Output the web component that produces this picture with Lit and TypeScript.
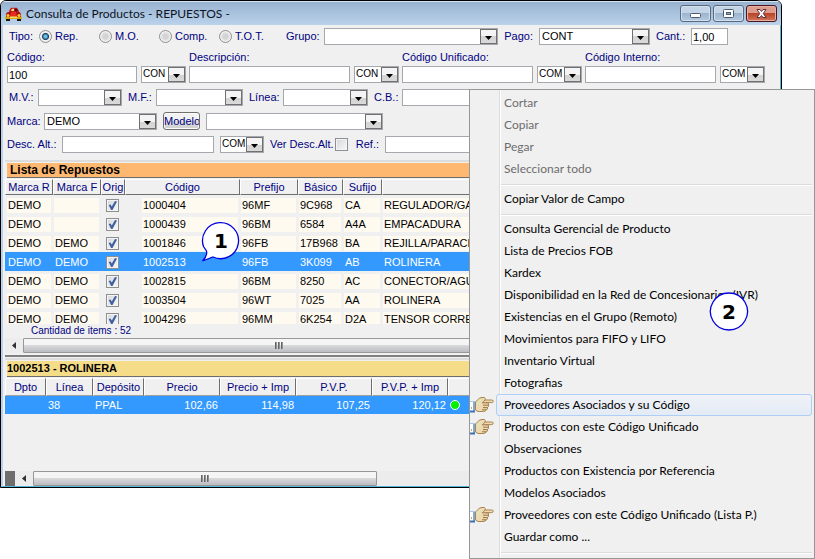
import { LitElement, html, css, svg, nothing } from "lit";
import { customElement, property } from "lit/decorators.js";

const box = css`
  *,
  *::before,
  *::after {
    box-sizing: border-box;
  }
`;

const check = css`
  input[type="checkbox"] {
    appearance: none;
    display: block;
    flex: none;
    width: 13px;
    height: 13px;
    margin: 0;
    border: 1px solid #8e8f8f;
    background: linear-gradient(135deg, #d4d7dc, #f8f8f8);
    box-shadow: inset 0 0 0 1px #f4f4f4;
  }
  input[type="checkbox"]:checked::before {
    content: "";
    display: block;
    width: 9px;
    height: 9px;
    margin: 1px;
    background: #40609f;
    clip-path: polygon(8% 45%, 28% 38%, 42% 62%, 78% 0, 100% 6%, 50% 100%, 34% 100%);
  }
`;

/** Drop-down with a raised arrow button. */
@customElement("combo-box")
export class ComboBox extends LitElement {
  @property() value = "";
  @property() name = "";
  @property({ type: Boolean }) small = false;

  static styles = [
    box,
    css`
      :host {
        display: grid;
        min-width: 0;
        height: 17px;
      }
      select,
      .arrow {
        grid-area: 1 / 1;
      }
      select {
        appearance: none;
        width: 100%;
        min-width: 0;
        height: 17px;
        margin: 0;
        padding: 0 18px 0 2px;
        border: 1px solid #a5a8ad;
        border-radius: 0;
        background: #fff;
        color: #000;
        font: 11px/15px "Liberation Sans", Arial, sans-serif;
      }
      select.small {
        font-size: 10px;
        line-height: 13px;
        padding: 0 16px 2px 1px;
      }
      .arrow {
        justify-self: end;
        display: flex;
        align-items: center;
        justify-content: center;
        width: 17px;
        height: 15px;
        margin: 1px;
        border: 1px solid #707070;
        background: linear-gradient(#f4f4f4 50%, #d2d2d2 50%, #dadada);
        pointer-events: none;
      }
      svg {
        display: block;
        margin-top: 3px;
      }
    `,
  ];

  render() {
    return html`<select class=${this.small ? "small" : ""} aria-label=${this.name}>
        <option>${this.value}</option>
      </select>
      <span class="arrow"
        ><svg width="7" height="4" viewBox="0 0 7 4"><path d="M0 0h7L3.5 4z" fill="#000" /></svg
      ></span>`;
  }
}

/** Horizontal scroll bar with a left arrow and a thumb. */
@customElement("scroll-strip")
export class ScrollStrip extends LitElement {
  @property({ type: Number }) share = 60;

  static styles = [
    box,
    css`
      :host {
        display: flex;
        height: 15px;
        background: #ececec;
      }
      .left {
        display: grid;
        place-items: center;
        width: 18px;
        padding: 0;
        border: 0;
        background: none;
      }
      .thumb {
        display: flex;
        align-items: center;
        justify-content: center;
        gap: 1px;
        border: 1px solid #979797;
        border-radius: 1px;
        background: linear-gradient(#f5f5f5 45%, #d9d9dc 50%, #bcbdc1);
      }
      .thumb i {
        width: 2px;
        height: 7px;
        background: linear-gradient(90deg, #505050, #a8a8a8);
      }
    `,
  ];

  render() {
    return html`<button class="left" aria-label="Desplazar a la izquierda">
        <svg width="4" height="7" viewBox="0 0 4 7"><path d="M4 0v7L0 3.5z" fill="#303030" /></svg>
      </button>
      <div class="thumb" style="width:${this.share}%"><i></i><i></i><i></i></div>`;
  }
}

interface Part {
  marcaR: string;
  marcaF: string;
  codigo: string;
  prefijo: string;
  basico: string;
  sufijo: string;
  desc: string;
}

const part = (
  marcaF: string,
  codigo: string,
  prefijo: string,
  basico: string,
  sufijo: string,
  desc: string
): Part => ({ marcaR: "DEMO", marcaF, codigo, prefijo, basico, sufijo, desc });

const PARTS: Part[] = [
  part("", "1000404", "96MF", "9C968", "CA", "REGULADOR/GASOLINA"),
  part("", "1000439", "96BM", "6584", "A4A", "EMPACADURA"),
  part("DEMO", "1001846", "96FB", "17B968", "BA", "REJILLA/PARACHOQUE"),
  part("DEMO", "1002513", "96FB", "3K099", "AB", "ROLINERA"),
  part("DEMO", "1002815", "96BM", "8250", "AC", "CONECTOR/AGUA"),
  part("DEMO", "1003504", "96WT", "7025", "AA", "ROLINERA"),
  part("DEMO", "1004296", "96MM", "6K254", "D2A", "TENSOR CORREA"),
];
const SELECTED = "1002513";

/** Table of the spare parts found. */
@customElement("parts-list")
export class PartsList extends LitElement {
  static styles = [
    box,
    check,
    css`
      :host {
        display: block;
        height: 145px;
        overflow: hidden;
      }
      table {
        width: 100%;
        table-layout: fixed;
        border-collapse: separate;
        border-spacing: 0;
        font: 11px/14px "Liberation Sans", Arial, sans-serif;
        color: #000;
      }
      col.marca {
        width: 48px;
      }
      col.orig {
        width: 24px;
      }
      col.codigo {
        width: 115px;
      }
      col.prefijo {
        width: 58px;
      }
      col.basico {
        width: 45px;
      }
      col.sufijo {
        width: 39px;
      }
      th {
        height: 16px;
        padding: 0;
        border: 1px solid;
        border-color: #fff #6e6e6e #6e6e6e #fff;
        color: #000080;
        font-weight: normal;
        white-space: nowrap;
      }
      td {
        height: 19px;
        padding: 3px 2px 1px 1px;
        white-space: nowrap;
      }
      td:first-child {
        padding-left: 2px;
      }
      td.codigo {
        padding-left: 17px;
      }
      td span {
        display: block;
        height: 15px;
        padding-left: 1px;
        background: #fffaf0;
      }
      td input[type="checkbox"] {
        margin: 0 auto;
      }
      tr.selected {
        background: #3399ff;
        color: #fff;
      }
      tr.selected span {
        background: none;
      }
    `,
  ];

  render() {
    return html`<table>
      <colgroup>
        <col class="marca" />
        <col class="marca" />
        <col class="orig" />
        <col class="codigo" />
        <col class="prefijo" />
        <col class="basico" />
        <col class="sufijo" />
        <col />
      </colgroup>
      <thead>
        <tr>
          <th>Marca R</th>
          <th>Marca F</th>
          <th>Orig</th>
          <th>Código</th>
          <th>Prefijo</th>
          <th>Básico</th>
          <th>Sufijo</th>
          <th></th>
        </tr>
      </thead>
      <tbody>
        ${PARTS.map(
          (p) => html`<tr class=${p.codigo === SELECTED ? "selected" : ""}>
            <td><span>${p.marcaR}</span></td>
            <td><span>${p.marcaF}</span></td>
            <td><input type="checkbox" checked aria-label="Original ${p.codigo}" /></td>
            <td class="codigo"><span>${p.codigo}</span></td>
            <td><span>${p.prefijo}</span></td>
            <td><span>${p.basico}</span></td>
            <td><span>${p.sufijo}</span></td>
            <td><span>${p.desc}</span></td>
          </tr>`
        )}
      </tbody>
    </table>`;
  }
}

/** Prices of the selected part, by warehouse. */
@customElement("price-list")
export class PriceList extends LitElement {
  static styles = [
    box,
    css`
      :host {
        display: block;
        min-height: 93px;
      }
      table {
        width: 100%;
        table-layout: fixed;
        border-collapse: separate;
        border-spacing: 0;
        font: 11px/15px "Liberation Sans", Arial, sans-serif;
      }
      col.dpto {
        width: 41px;
      }
      col.linea {
        width: 47px;
      }
      col.deposito {
        width: 51px;
      }
      col.precio {
        width: 76px;
      }
      th {
        height: 18px;
        padding: 0;
        border: 1px solid;
        border-color: #fff #6e6e6e #a0a0a0 #fff;
        color: #000080;
        font-weight: normal;
        white-space: nowrap;
      }
      td {
        height: 18px;
        padding: 1px 2px;
        background: #3399ff;
        color: #fff;
      }
      td.num {
        text-align: right;
      }
      .dot {
        display: block;
        width: 10px;
        height: 10px;
        border: 1px solid #fff;
        border-radius: 50%;
        background: #00f000;
      }
    `,
  ];

  render() {
    return html`<table>
      <colgroup>
        <col class="dpto" />
        <col class="linea" />
        <col class="deposito" />
        <col class="precio" />
        <col class="precio" />
        <col class="precio" />
        <col class="precio" />
        <col />
      </colgroup>
      <thead>
        <tr>
          <th>Dpto</th>
          <th>Línea</th>
          <th>Depósito</th>
          <th>Precio</th>
          <th>Precio + Imp</th>
          <th>P.V.P.</th>
          <th>P.V.P. + Imp</th>
          <th></th>
        </tr>
      </thead>
      <tbody>
        <tr>
          <td></td>
          <td>38</td>
          <td>PPAL</td>
          <td class="num">102,66</td>
          <td class="num">114,98</td>
          <td class="num">107,25</td>
          <td class="num">120,12</td>
          <td><span class="dot"></span></td>
        </tr>
      </tbody>
    </table>`;
  }
}

interface MenuEntry {
  text: string;
  disabled?: boolean;
  hand?: boolean;
  active?: boolean;
}

const MENU: MenuEntry[][] = [
  ["Cortar", "Copiar", "Pegar", "Seleccionar todo"].map((text) => ({ text, disabled: true })),
  [{ text: "Copiar Valor de Campo" }],
  [
    { text: "Consulta Gerencial de Producto" },
    { text: "Lista de Precios FOB" },
    { text: "Kardex" },
    { text: "Disponibilidad en la Red de Concesionarios (IVR)" },
    { text: "Existencias en el Grupo (Remoto)" },
    { text: "Movimientos para FIFO y LIFO" },
    { text: "Inventario Virtual" },
    { text: "Fotografias" },
    { text: "Proveedores Asociados y su Código", hand: true, active: true },
    { text: "Productos con este Código Unificado", hand: true },
    { text: "Observaciones" },
    { text: "Productos con Existencia por Referencia" },
    { text: "Modelos Asociados" },
    { text: "Proveedores con este Código Unificado (Lista P.)", hand: true },
    { text: "Guardar como ..." },
  ],
];

const hand = html`<svg width="24" height="18" viewBox="0 0 24 18">
  <path d="M0 5.5H4V15H0z" fill="#fff" />
  <path d="M0 5h5v1H0z" fill="#a9c8ec" />
  <path d="M3 6h2v9H3z" fill="#7fa9dc" />
  <path d="M0 14.500h5V16.500H0z" fill="#3f6fb0" />
  <path d="M1 11h1v2H1z" fill="#c8a840" />
  <path
    d="M5.500 6 L8 3.5 Q9 1.5 12 1.5 H14.5 Q16 2.5 15 4 H21.5 Q23.5 4 23.3 5.5 Q23 6.6 21.5 6.6 H16.5 Q19.5 7 18.5 9 Q19 10.5 17.5 11.5 Q18 13.5 16 14 Q15.5 15.5 13.5 15.5 H8 L5.500 14 Z"
    fill="#efd9ae"
    stroke="#a98352"
  />
  <path d="M8 5 Q10 2.5 13 3 L11 6 L11 9 H7 V6z" fill="#e2e3bb" />
  <path d="M12 6.8h5M13 9.2h5M13 11.6h4.5M12 13.8h4" stroke="#9c7444" fill="none" />
  <path d="M15 4 L12.5 6.8" stroke="#a98352" fill="none" />
</svg>`;

/** Context menu of the parts list. */
@customElement("context-menu")
export class ContextMenu extends LitElement {
  static styles = [
    box,
    css`
      :host {
        display: block;
        box-sizing: border-box;
        padding: 2px;
        border: 1px solid #979797;
        background: linear-gradient(90deg, #f0f0f0 29px, #dcdcdc 29px 30px, #fff 30px 31px, #f0f0f0 31px);
        font: 12px/20px Lato, "Open Sans", sans-serif;
      }
      ul {
        margin: 0;
        padding: 0;
        list-style: none;
      }
      ul.group::after {
        content: "";
        display: block;
        height: 2px;
        margin: 4px 0 2px 29px;
        border-top: 1px solid #dcdcdc;
        border-bottom: 1px solid #fff;
      }
      li {
        display: flex;
        height: 22px;
      }
      .icon {
        flex: none;
        display: flex;
        align-items: center;
        width: 24px;
        margin-left: -2px;
        margin-right: 2px;
      }
      button {
        flex: 1;
        padding: 0 0 0 7px;
        border: 1px solid transparent;
        border-radius: 3px;
        background: none;
        color: #000;
        font: inherit;
        text-align: left;
        white-space: nowrap;
      }
      button:disabled {
        color: #6d6d6d;
      }
      button.active {
        border-color: #aecff7;
        background: linear-gradient(#f0f2f6, #e4ebf5);
      }
    `,
  ];

  render() {
    return MENU.map(
      (group) => html`<ul class="group">
        ${group.map(
          (e) => html`<li>
            <span class="icon">${e.hand ? hand : nothing}</span>
            <button class=${e.active ? "active" : ""} ?disabled=${e.disabled}>${e.text}</button>
          </li>`
        )}
      </ul>`
    );
  }
}

const car = html`<svg width="17" height="14" viewBox="0 0 17 14">
  <path d="M4 4 L6 0.8 H12 L14 4 L13 8 H5z" fill="#c01818" />
  <path d="M6 4 L7 1.8 H9 V4z" fill="#f2e28a" />
  <path d="M10 4 V1.8 H11.5 L12.6 4z" fill="#301010" />
  <path d="M1 8 Q1 5 4 5 H14 Q16 5 16 9 V11 H1z" fill="#a81414" />
  <path d="M6 5h5l1 5H5z" fill="#e82c20" />
  <circle cx="3" cy="8.500" r="1.500" fill="#f5d020" />
  <circle cx="14" cy="8.500" r="1.500" fill="#f5d020" />
  <path d="M0 10h17v2H0z" fill="#d8a810" />
  <path d="M5 9.500h7v1.500H5z" fill="#f8e060" />
  <path d="M1 12h4v2H1zM12 12h4v2h-4z" fill="#181818" />
</svg>`;

const controlIcon = {
  min: svg`<rect x="0.5" y="4.500" width="10" height="4" rx="1" fill="#fff" stroke="#4c5a70"/>`,
  max: svg`<rect x="0.500" y="0.500" width="10" height="8" rx="1" fill="#fff" stroke="#4c5a70"/>
    <rect x="3.500" y="3.500" width="4" height="2" fill="#8fa9c8" stroke="#4c5a70"/>`,
  close: svg`<path d="M1 0.500h3l1.500 2 1.500-2h3L7.300 4.500 10 8.500H7L5.500 6.500 4 8.500H1L3.700 4.500z" fill="#fff" stroke="#5a3038"/>`,
};

@customElement("app-root")
export class AppRoot extends LitElement {
  static styles = [
    box,
    check,
    css`
      :host {
        display: block;
        position: relative;
        min-height: 559px;
        padding-right: 33px;
        background: #fff;
        color: #000080;
        font: 11px/15px "Liberation Sans", Arial, sans-serif;
        overflow: hidden;
        box-sizing: border-box;
      }
      .window {
        border: 1px solid #000;
        border-radius: 6px 6px 0 0;
        background: #f0f0f0;
        overflow: hidden;
      }
      .title {
        display: flex;
        align-items: center;
        height: 24px;
        padding: 0 4px;
        border-top: 1px solid #d4e4f4;
        background: linear-gradient(#98b2d0, #bad2eb);
        color: #0c1424;
      }
      .title h1 {
        flex: 1;
        margin: 0 0 0 4px;
        font: 12px/20px Lato, "Open Sans", sans-serif;
      }
      .controls {
        display: flex;
        gap: 2px;
      }
      .controls button {
        display: grid;
        place-items: center;
        width: 31px;
        height: 17px;
        padding: 0;
        border: 1px solid #57697f;
        border-radius: 3px;
        background: linear-gradient(#c3d4e6 50%, #9cb4cd 50%, #b4cce2);
        box-shadow: inset 0 0 0 1px #d4e2f0;
      }
      .controls .close {
        border-color: #4a1420;
        background: linear-gradient(#dd9c8c 45%, #bb4328 50%, #d0765a);
        box-shadow: inset 0 0 0 1px #e6b0a4;
      }
      .body {
        border: solid #b9d1ea;
        border-width: 0 1px 1px 2px;
        border-right-color: #4fb8dc;
        border-bottom-color: #4fb8dc;
      }
      form {
        display: grid;
        gap: 6px;
        padding: 3px 0 7px 4px;
        overflow: hidden;
      }
      .line {
        display: grid;
        gap: 6px;
        align-items: center;
        white-space: nowrap;
      }
      .tipo {
        grid-template-columns: 24px 54px 54px 54px 61px 32px 174fr 29px 111fr 29px 37px;
        padding: 0 52px 0 2px;
      }
      .codes {
        grid-template-columns: 179fr 210fr 180fr 180fr;
        gap: 3px;
        padding-right: 15px;
      }
      .marks {
        grid-template-columns: 23px 84px 22px 87px 28px 85px 22px 130px;
        padding-left: 2px;
      }
      .marca {
        grid-template-columns: 31px 113px 37px 177px;
      }
      .alt {
        grid-template-columns: 49px 152px 44px 78px 25px 148px;
      }
      .end {
        text-align: right;
      }
      .choice {
        display: flex;
        align-items: center;
        gap: 3px;
      }
      .choice input[type="radio"] {
        appearance: none;
        flex: none;
        width: 13px;
        height: 13px;
        margin: 0;
        border: 1px solid #8e8f8f;
        border-radius: 50%;
        background: radial-gradient(circle, #d4d4d4 30%, #f4f4f4 70%);
      }
      .choice input[type="radio"]:checked {
        background: radial-gradient(circle, #6fc4e8 0 1px, #1c4f7c 3px, #123454 3px, #f0f0f0 4px);
      }
      .code {
        display: grid;
        grid-template-columns: 1fr 45px;
        gap: 3px 4px;
      }
      .code label {
        grid-column: 1 / 3;
        line-height: 12px;
      }
      input.text {
        width: 100%;
        min-width: 0;
        height: 17px;
        margin: 0;
        padding: 0 1px;
        border: 1px solid #a5a8ad;
        background: #fff;
        color: #000;
        font: inherit;
      }
      .model {
        height: 18px;
        padding: 0;
        border: 1px solid #707070;
        border-radius: 3px;
        background: linear-gradient(#f2f2f2 50%, #dcdcdc 50%, #d0d0d0);
        box-shadow: inset 0 0 0 1px #fafafa;
        color: #000080;
        font: inherit;
        overflow: hidden;
      }
      .ver {
        display: flex;
        align-items: center;
        justify-content: space-between;
      }
      .panel {
        margin-left: 2px;
        border-top: 2px solid #dcdcdc;
      }
      .panel h2 {
        margin: 1px 0 1px 2px;
        padding: 0 0 0 3px;
        border-bottom: 1px solid #6e6e6e;
        background: #ffb870;
        color: #000;
        font: bold 12px/14px "Liberation Sans", Arial, sans-serif;
      }
      .panel h2.detail {
        padding-left: 0;
        background: #f5dc88;
        font-size: 11px;
        line-height: 15px;
      }
      .count {
        margin: 0;
        padding-left: 26px;
        font-size: 10px;
        line-height: 14px;
      }
      .first {
        padding-bottom: 2px;
        border-bottom: 2px solid #808080;
      }
      .second {
        margin-top: 1px;
      }
      .foot {
        display: flex;
      }
      .foot::before {
        content: "";
        width: 10px;
        background: #6e6e6e;
      }
      .foot scroll-strip {
        flex: 1;
      }
      context-menu {
        position: absolute;
        top: 89px;
        right: 0;
        width: 346px;
      }
      .mark {
        position: absolute;
        display: grid;
        justify-items: center;
        align-items: start;
        width: 40px;
        height: 44px;
        color: #000;
        font: bold 20px/40px "DejaVu Sans", Verdana, sans-serif;
      }
      .mark svg,
      .mark b {
        grid-area: 1 / 1;
      }
      .mark.one {
        left: 201px;
        top: 221px;
      }
      .mark.two {
        right: 66px;
        top: 292px;
      }
    `,
  ];

  private code(label: string, id: string, mode: string, value = "") {
    return html`<div class="code">
      <label for=${id}>${label}</label>
      <input class="text" id=${id} .value=${value} />
      <combo-box small value=${mode} name="Modo ${label}"></combo-box>
    </div>`;
  }

  private bubble(cls: string, n: string, tail: boolean) {
    const d = tail
      ? "M2.500 25.500 A18 18 0 1 1 12 36 L1.500 40 Q6.500 35 5.500 30 Z"
      : "M20 1 A18.500 18.500 0 1 1 19.900 1 Z";
    return html`<div class="mark ${cls}">
      <svg width="40" height="44" viewBox="0 0 40 44">
        <path d=${d} fill="#fff" stroke="#0000e0" stroke-width="1.300" />
      </svg>
      <b>${n}</b>
    </div>`;
  }

  render() {
    return html`<main class="window">
        <header class="title">
          ${car}
          <h1>Consulta de Productos - REPUESTOS -</h1>
          <div class="controls">
            <button aria-label="Minimizar"><svg width="11" height="9">${controlIcon.min}</svg></button>
            <button aria-label="Maximizar"><svg width="11" height="9">${controlIcon.max}</svg></button>
            <button class="close" aria-label="Cerrar"><svg width="11" height="9">${controlIcon.close}</svg></button>
          </div>
        </header>
        <div class="body">
          <form>
            <div class="line tipo">
              <span>Tipo:</span>
              ${["Rep.", "M.O.", "Comp.", "T.O.T."].map(
                (t, i) => html`<label class="choice"
                  ><input type="radio" name="tipo" ?checked=${i === 0} />${t}</label
                >`
              )}
              <span>Grupo:</span>
              <combo-box name="Grupo"></combo-box>
              <span class="end">Pago:</span>
              <combo-box name="Pago" value="CONT"></combo-box>
              <label class="end" for="cant">Cant.:</label>
              <input class="text" id="cant" .value=${"1,00"} />
            </div>
            <div class="line codes">
              ${this.code("Código:", "codigo", "CON", "100")}
              ${this.code("Descripción:", "descripcion", "CON")}
              ${this.code("Código Unificado:", "unificado", "COM")}
              ${this.code("Código Interno:", "interno", "COM")}
            </div>
            <div class="line marks">
              <span>M.V.:</span><combo-box name="M.V."></combo-box>
              <span>M.F.:</span><combo-box name="M.F."></combo-box>
              <span>Línea:</span><combo-box name="Línea"></combo-box>
              <label for="cb">C.B.:</label><input class="text" id="cb" />
            </div>
            <div class="line marca">
              <span>Marca:</span><combo-box name="Marca" value="DEMO"></combo-box>
              <button type="button" class="model">Modelo</button>
              <combo-box name="Modelo"></combo-box>
            </div>
            <div class="line alt">
              <label for="alt">Desc. Alt.:</label><input class="text" id="alt" />
              <combo-box small name="Modo Desc. Alt." value="COM"></combo-box>
              <label class="ver">Ver Desc.Alt.<input type="checkbox" /></label>
              <label class="end" for="ref">Ref.:</label><input class="text" id="ref" />
            </div>
          </form>
          <section class="panel first">
            <h2>Lista de Repuestos</h2>
            <parts-list></parts-list>
            <p class="count">Cantidad de items : 52</p>
            <scroll-strip share="66"></scroll-strip>
          </section>
          <section class="panel second">
            <h2 class="detail">1002513 - ROLINERA</h2>
            <price-list></price-list>
            <div class="foot"><scroll-strip share="45"></scroll-strip></div>
          </section>
        </div>
      </main>
      <context-menu></context-menu>
      ${this.bubble("one", "1", true)} ${this.bubble("two", "2", false)}`;
  }
}
